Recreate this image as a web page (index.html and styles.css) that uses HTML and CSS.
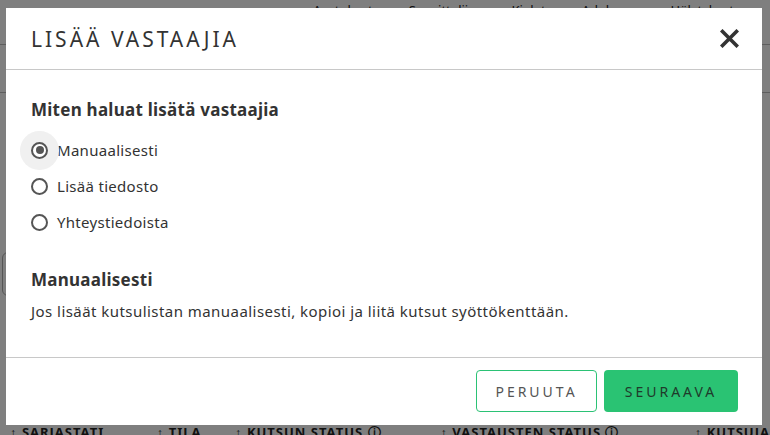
FILE: index.html
```html
<!DOCTYPE html>
<html lang="fi">

<head>
    <meta charset="UTF-8">
    <meta name="viewport" content="width=device-width, initial-scale=1.0">
    <title>Lisää vastaajia</title>
    <link rel="stylesheet" href="styles.css">
</head>

<body>

    <div class="page">
        <nav class="topnav">
            <span>Asetukset</span>
            <span>Suosittelija</span>
            <span>Kielet</span>
            <span>Adobe Anal.</span>
            <span>Hälytykset</span>
        </nav>
        <div class="page-line"></div>
        <div class="page-line second"></div>
        <div class="page-box"></div>
        <div class="table-head">
            <span class="col c1">&#8597; SARJASTATI</span>
            <span class="col c2">&#8597; TILA</span>
            <span class="col c3">&#8597; KUTSUN STATUS &#9432;</span>
            <span class="col c4">&#8597; VASTAUSTEN STATUS &#9432;</span>
            <span class="col c5">&#8597; KUTSUJA</span>
        </div>
    </div>

    <div class="overlay">
        <div class="modal">
            <div class="modal-header">
                <h1>LISÄÄ VASTAAJIA</h1>
                <button class="close" aria-label="Sulje">
                    <svg width="19" height="19" viewBox="0 0 19 19">
                        <path d="M2.5 2.5 L16.5 16.5 M16.5 2.5 L2.5 16.5" stroke="#333" stroke-width="3.6" stroke-linecap="square" fill="none" />
                    </svg>
                </button>
            </div>

            <div class="modal-body">
                <h2>Miten haluat lisätä vastaajia</h2>

                <label class="radio-row">
                    <span class="radio checked"><span class="dot"></span></span>
                    Manuaalisesti
                </label>
                <label class="radio-row">
                    <span class="radio"></span>
                    Lisää tiedosto
                </label>
                <label class="radio-row">
                    <span class="radio"></span>
                    Yhteystiedoista
                </label>

                <h2 class="section-title">Manuaalisesti</h2>
                <p>Jos lisäät kutsulistan manuaalisesti, kopioi ja liitä kutsut syöttökenttään.</p>
            </div>

            <div class="modal-footer">
                <button class="btn btn-outline">PERUUTA</button>
                <button class="btn btn-primary">SEURAAVA</button>
            </div>
        </div>
    </div>

</body>

</html>
```

FILE: styles.css
```css
body {
    font-family: 'Noto Sans', sans-serif;
    margin: 0;
    padding: 0;
    width: 770px;
    height: 435px;
    overflow: hidden;
    background-color: #fff;
    color: #333;
}

/* page behind the dialog */
.page {
    height: 435px;
    overflow: hidden;
}

.topnav {
    display: flex;
    height: 22px;
    padding: 1px 0 0 313px;
    box-sizing: border-box;
    font-size: 13px;
    line-height: 18px;
    color: #222;
}

.topnav span {
    margin-right: 36px;
}

.page-line {
    margin-top: 22px;
    height: 1px;
    background-color: #bdbdbd;
}

.page-line.second {
    margin-top: 47px;
}

.page-box {
    margin: 159px 0 0 2px;
    width: 200px;
    height: 42px;
    border: 1px solid #aaa;
    border-radius: 6px;
}

.table-head {
    display: flex;
    margin-top: 127px;
    font-size: 13px;
    line-height: 18px;
    font-weight: bold;
    letter-spacing: 1px;
    color: #222;
    white-space: nowrap;
}

.col.c1 { width: 150px; padding-left: 10px; }
.col.c2 { width: 80px; }
.col.c3 { width: 210px; }
.col.c4 { width: 260px; }

/* dialog */
.overlay {
    position: fixed;
    top: 0;
    left: 0;
    right: 0;
    bottom: 0;
    background-color: rgba(0, 0, 0, 0.5);
    padding: 8px 0 0 6px;
}

.modal {
    width: 756px;
    height: 417px;
    background-color: #fff;
    display: flex;
    flex-direction: column;
}

.modal-header {
    height: 62px;
    border-bottom: 1px solid #c8c8c8;
    display: flex;
    align-items: center;
    justify-content: space-between;
    padding: 0 23px 0 25px;
    box-sizing: border-box;
    flex-shrink: 0;
}

.modal-header h1 {
    margin: 0;
    font-size: 21px;
    font-weight: normal;
    letter-spacing: 3px;
    color: #333;
}

.close {
    background: none;
    border: none;
    padding: 0;
    width: 19px;
    height: 19px;
    cursor: pointer;
}

.modal-body {
    flex: 1;
    padding: 28px 25px 0;
}

.modal-body h2 {
    margin: 0 0 10px;
    font-size: 17px;
    line-height: 24px;
    font-weight: bold;
    letter-spacing: 0.25px;
    color: #333;
}

.radio-row {
    display: flex;
    align-items: center;
    height: 36px;
    font-size: 15px;
    letter-spacing: 0.3px;
    color: #333;
}

.radio {
    position: relative;
    width: 17px;
    height: 17px;
    border: 2px solid #555;
    border-radius: 50%;
    box-sizing: border-box;
    margin-right: 9px;
    flex-shrink: 0;
}

.radio.checked {
    box-shadow: 0 0 0 11px #f0f0f0;
}

.radio .dot {
    position: absolute;
    left: 2.5px;
    top: 2.5px;
    width: 8px;
    height: 8px;
    border-radius: 50%;
    background-color: #555;
}

.modal-body .section-title {
    margin-top: 28px;
    margin-bottom: 8px;
}

.modal-body p {
    margin: 0;
    font-size: 15px;
    line-height: 22px;
    letter-spacing: 0.45px;
    color: #333;
}

.modal-footer {
    height: 68px;
    border-top: 1px solid #c8c8c8;
    display: flex;
    justify-content: flex-end;
    align-items: flex-start;
    gap: 7px;
    padding: 12px 24px 0 0;
    box-sizing: border-box;
    flex-shrink: 0;
}

.btn {
    height: 42px;
    border-radius: 4px;
    font-family: 'Noto Sans', sans-serif;
    font-size: 14px;
    letter-spacing: 3px;
    cursor: pointer;
}

.btn-outline {
    width: 121px;
    background-color: #fff;
    border: 1px solid #2bc275;
    color: #555;
}

.btn-primary {
    width: 134px;
    background-color: #2ac373;
    border: none;
    color: #1f3a2b;
}
```
